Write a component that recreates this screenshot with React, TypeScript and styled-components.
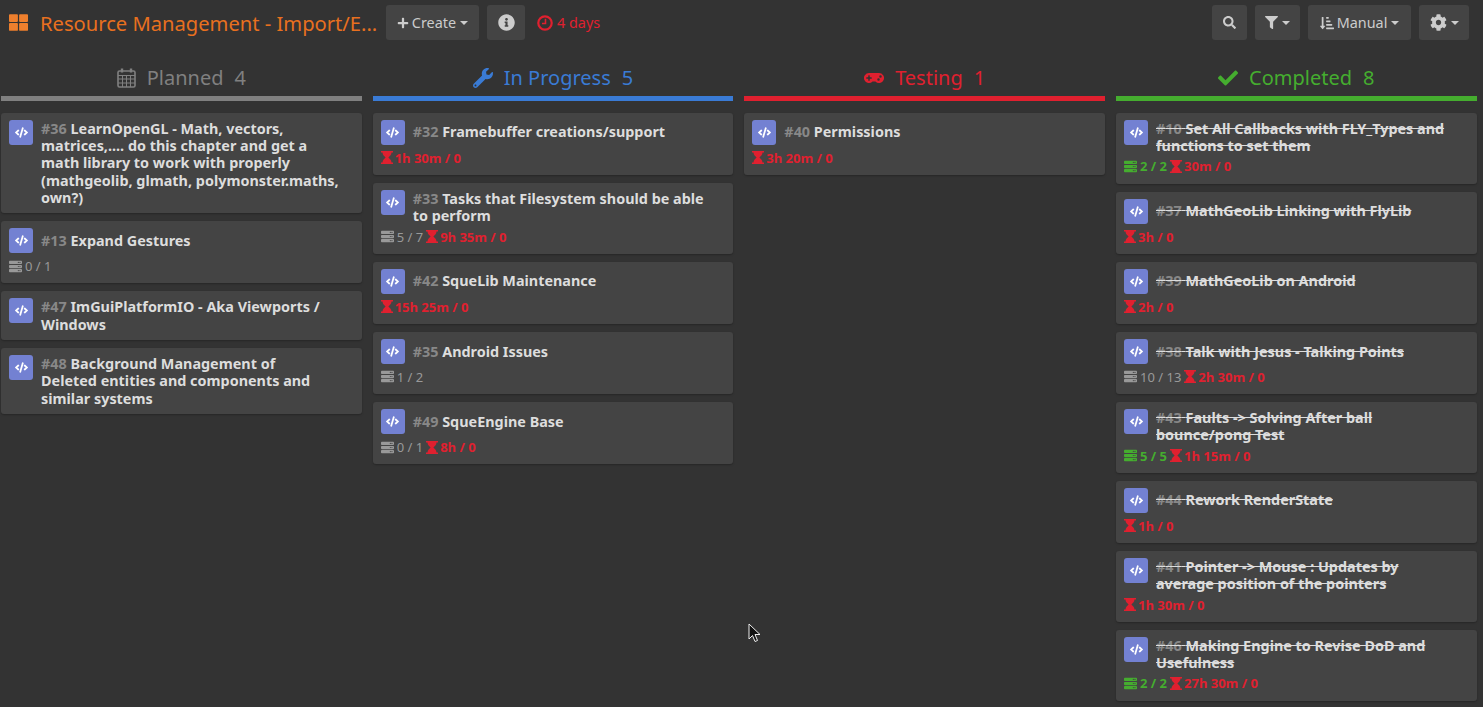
import styled, { createGlobalStyle } from 'styled-components';
import {
  FaThLarge,
  FaPlus,
  FaInfoCircle,
  FaSearch,
  FaFilter,
  FaSortAmountDownAlt,
  FaCog,
  FaWrench,
  FaGamepad,
  FaCheck,
  FaCode,
  FaServer,
} from 'react-icons/fa';
import type { ReactNode } from 'react';

const RED = '#e0202f';
const GREEN = '#45ad2f';

interface Task {
  id: number;
  title: string;
  tasks?: string;
  tasksDone?: boolean;
  time?: string;
}

interface Lane {
  name: string;
  color: string;
  icon: ReactNode;
  done?: boolean;
  items: Task[];
}

function CalendarIcon() {
  return (
    <svg width="19" height="20" viewBox="0 0 19 20" fill="none" stroke="currentColor">
      <rect x="1" y="3" width="17" height="16" rx="1.5" strokeWidth="1.6" />
      <path d="M1 7.5h17M1 11h17M1 15h17M5.5 7.5V19M9.5 7.5V19M13.5 7.5V19" strokeWidth="1" />
      <path d="M5 0.5v4M14 0.5v4" strokeWidth="2.4" />
    </svg>
  );
}

function HourglassIcon() {
  return (
    <svg width="12" height="13" viewBox="0 0 12 13" fill="currentColor">
      <path d="M0 0h12v1.5H0zM0 11.5h12V13H0zM1.5 1.5h9C10.5 4 8.5 5.3 7.4 6.5 8.5 7.7 10.5 9 10.5 11.5h-9C1.5 9 3.5 7.7 4.6 6.5 3.5 5.3 1.5 4 1.5 1.5z" />
    </svg>
  );
}

function ClockIcon() {
  return (
    <svg width="16" height="16" viewBox="0 0 16 16" fill="none" stroke="currentColor">
      <circle cx="8" cy="8" r="6.7" strokeWidth="2.2" />
      <path d="M8.5 3.8v4.7H5" strokeWidth="1.6" />
    </svg>
  );
}

const lanes: Lane[] = [
  {
    name: 'Planned',
    color: '#808080',
    icon: <CalendarIcon />,
    items: [
      {
        id: 36,
        title:
          'LearnOpenGL - Math, vectors, matrices,.... do this chapter and get a math library to work with properly (mathgeolib, glmath, polymonster.maths, own?)',
      },
      { id: 13, title: 'Expand Gestures', tasks: '0 / 1' },
      { id: 47, title: 'ImGuiPlatformIO - Aka Viewports / Windows' },
      {
        id: 48,
        title: 'Background Management of Deleted\u00a0entities and components and similar systems',
      },
    ],
  },
  {
    name: 'In Progress',
    color: '#3a7bd5',
    icon: <FaWrench />,
    items: [
      { id: 32, title: 'Framebuffer creations/support', time: '1h 30m / 0' },
      { id: 33, title: 'Tasks that Filesystem should be able to perform', tasks: '5 / 7', time: '9h 35m / 0' },
      { id: 42, title: 'SqueLib Maintenance', time: '15h 25m / 0' },
      { id: 35, title: 'Android Issues', tasks: '1 / 2' },
      { id: 49, title: 'SqueEngine Base', tasks: '0 / 1', time: '8h / 0' },
    ],
  },
  {
    name: 'Testing',
    color: RED,
    icon: <FaGamepad />,
    items: [{ id: 40, title: 'Permissions', time: '3h 20m / 0' }],
  },
  {
    name: 'Completed',
    color: GREEN,
    icon: <FaCheck />,
    done: true,
    items: [
      { id: 10, title: 'Set All Callbacks with FLY_Types and functions to set them', tasks: '2 / 2', tasksDone: true, time: '30m / 0' },
      { id: 37, title: 'MathGeoLib Linking with FlyLib', time: '3h / 0' },
      { id: 39, title: 'MathGeoLib on Android', time: '2h / 0' },
      { id: 38, title: 'Talk with Jesus - Talking Points', tasks: '10 / 13', time: '2h 30m / 0' },
      { id: 43, title: 'Faults -> Solving After ball bounce/pong Test', tasks: '5 / 5', tasksDone: true, time: '1h 15m / 0' },
      { id: 44, title: 'Rework RenderState', time: '1h / 0' },
      { id: 41, title: 'Pointer -> Mouse : Updates by average position of the pointers', time: '1h 30m / 0' },
      { id: 46, title: 'Making Engine to Revise DoD and Usefulness', tasks: '2 / 2', tasksDone: true, time: '27h 30m / 0' },
    ],
  },
];

export default function App() {
  return (
    <Page>
      <GlobalStyle />
      <Toolbar>
        <TitleIcon>
          <FaThLarge />
        </TitleIcon>
        <Title>Resource Management - Import/E...</Title>
        <ToolButton $width={93}>
          <FaPlus size={12} />
          Create
          <Caret />
        </ToolButton>
        <ToolButton $width={38}>
          <FaInfoCircle size={17} />
        </ToolButton>
        <DueDate>
          <ClockIcon />4 days
        </DueDate>
        <Spacer />
        <ToolButton $width={35}>
          <FaSearch size={13} />
        </ToolButton>
        <ToolButton $width={45}>
          <FaFilter size={13} />
          <Caret />
        </ToolButton>
        <ToolButton $width={103}>
          <FaSortAmountDownAlt size={14} />
          Manual
          <Caret />
        </ToolButton>
        <ToolButton $width={50}>
          <FaCog size={17} />
          <Caret />
        </ToolButton>
      </Toolbar>
      <Board>
        {lanes.map((lane) => (
          <Column key={lane.name}>
            <ColumnHeader $color={lane.color}>
              {lane.icon}
              <span>{lane.name}</span>
              <span>{lane.items.length}</span>
            </ColumnHeader>
            {lane.items.map((item) => (
              <Card key={item.id}>
                <CardTop>
                  <TypeBadge>
                    <FaCode size={13} />
                  </TypeBadge>
                  <CardTitle $done={lane.done}>
                    <span>
                      <IssueId>#{item.id}</IssueId> {item.title}
                    </span>
                  </CardTitle>
                </CardTop>
                {(item.tasks || item.time) && (
                  <CardMeta>
                    {item.tasks && (
                      <TaskCount $done={item.tasksDone}>
                        <FaServer size={13} />
                        {item.tasks}
                      </TaskCount>
                    )}
                    {item.time && (
                      <TimeSpent>
                        <HourglassIcon />
                        {item.time}
                      </TimeSpent>
                    )}
                  </CardMeta>
                )}
              </Card>
            ))}
          </Column>
        ))}
      </Board>
      <Pointer width="13" height="20" viewBox="0 0 13 20">
        <path d="M1 1v15l3.5-3.5 2.5 6 2.5-1-2.5-6h5z" fill="#111" stroke="#eee" strokeWidth="1" />
      </Pointer>
    </Page>
  );
}

const GlobalStyle = createGlobalStyle`
  html, body {
    margin: 0;
    padding: 0;
    background: #333;
    overflow: hidden;
  }
  * {
    box-sizing: border-box;
  }
`;

const Page = styled.div`
  position: relative;
  width: 1483px;
  height: 707px;
  overflow: hidden;
  background: #333;
  color: #ddd;
  font-family: 'Noto Sans', sans-serif;
  font-size: 14.4px;
`;

const Toolbar = styled.div`
  display: flex;
  align-items: center;
  gap: 8px;
  height: 45px;
  padding: 0 14px 0 9px;
`;

const TitleIcon = styled.span`
  display: flex;
  color: #ee7f2d;
  font-size: 19px;
  margin-right: 4px;
`;

const Title = styled.span`
  width: 338px;
  color: #e8701f;
  font-size: 20.16px;
  white-space: nowrap;
`;

const ToolButton = styled.div<{ $width: number }>`
  display: flex;
  flex: none;
  align-items: center;
  justify-content: center;
  gap: 3px;
  width: ${({ $width }) => $width}px;
  height: 35px;
  background: #444;
  border-radius: 3px;
  color: #ccc;
  font-size: 14.4px;
`;

const Caret = styled.i`
  display: inline-block;
  width: 0;
  height: 0;
  margin-left: 1px;
  border-left: 4px solid transparent;
  border-right: 4px solid transparent;
  border-top: 4px solid #ccc;
`;

const DueDate = styled.span`
  display: flex;
  align-items: center;
  gap: 4px;
  margin-left: 4px;
  color: ${RED};
`;

const Spacer = styled.div`
  flex: 1;
`;

const Board = styled.div`
  display: grid;
  grid-template-columns: repeat(4, 1fr);
  column-gap: 11px;
  align-items: start;
  padding: 0 6.33px 0 1px;
`;

const Column = styled.div`
  display: flex;
  flex-direction: column;
  gap: 8px;
  min-width: 0;
`;

const ColumnHeader = styled.div<{ $color: string }>`
  display: flex;
  align-items: center;
  justify-content: center;
  gap: 11px;
  height: 56px;
  padding-top: 14px;
  margin-bottom: 3.8px;
  border-bottom: 5px solid ${({ $color }) => $color};
  color: ${({ $color }) => $color};
  font-size: 20px;
  white-space: pre;
`;

const Card = styled.div`
  padding: 7px 8px;
  background: #444;
  border-radius: 3px;
  box-shadow: 0 1px 2px rgba(0, 0, 0, 0.25);
`;

const CardTop = styled.div`
  display: flex;
  gap: 8px;
  min-height: 26px;
`;

const TypeBadge = styled.span`
  display: flex;
  flex: none;
  align-items: center;
  justify-content: center;
  width: 24px;
  height: 25px;
  background: #7381d2;
  border-radius: 3px;
  color: #fff;
`;

const CardTitle = styled.div<{ $done?: boolean }>`
  display: flex;
  align-self: flex-start;
  align-items: center;
  min-height: 24.5px;
  padding-right: 12px;
  color: #ddd;
  font-size: 14.4px;
  font-weight: 700;
  line-height: 17.28px;
  text-decoration: ${({ $done }) => ($done ? 'line-through' : 'none')};
`;

const IssueId = styled.span`
  color: #888;
`;

const CardMeta = styled.div`
  display: flex;
  align-items: center;
  gap: 3px;
  height: 17px;
  margin: 3.5px 0 1.7px;
  font-size: 13px;
`;

const TaskCount = styled.span<{ $done?: boolean }>`
  display: flex;
  align-items: center;
  gap: 3px;
  color: ${({ $done }) => ($done ? GREEN : '#999')};
  font-weight: ${({ $done }) => ($done ? 700 : 400)};
`;

const TimeSpent = styled.span`
  display: flex;
  align-items: center;
  gap: 2px;
  color: ${RED};
  font-weight: 700;
`;

const Pointer = styled.svg`
  position: absolute;
  left: 748px;
  top: 623px;
`;
